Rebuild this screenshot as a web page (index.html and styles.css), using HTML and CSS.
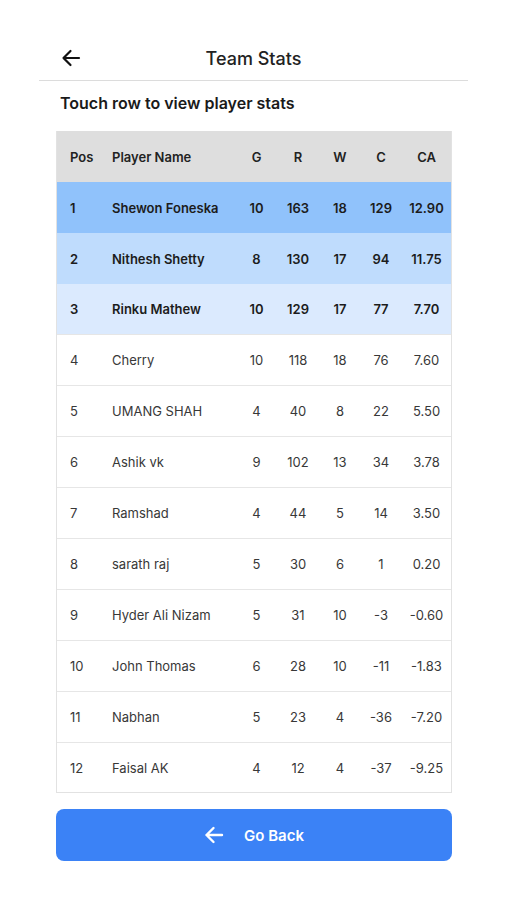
FILE: index.html
```html
<!DOCTYPE html>
<html lang="en">
<head>
    <meta charset="UTF-8">
    <meta name="viewport" content="width=device-width, initial-scale=1.0">
    <title>Team Stats</title>
    <link rel="stylesheet" href="styles.css">
</head>
<body>

<div class="screen">
    <!-- Barra superior -->
    <div class="topbar">
        <button class="back-icon" aria-label="Back">
            <svg width="20" height="18" viewBox="0 0 20 18" fill="none" stroke="#111" stroke-width="2.2" stroke-linecap="round" stroke-linejoin="round">
                <path d="M18 9H2.5M9.5 2L2.5 9l7 7"/>
            </svg>
        </button>
        <h1>Team Stats</h1>
    </div>

    <h2 class="hint">Touch row to view player stats</h2>

    <div class="table">
        <div class="row head">
            <span>Pos</span><span>Player Name</span><span class="num">G</span><span class="num">R</span><span class="num">W</span><span class="num">C</span><span class="num">CA</span>
        </div>
        <div class="row top top1">
            <span>1</span><span>Shewon Foneska</span><span class="num">10</span><span class="num">163</span><span class="num">18</span><span class="num">129</span><span class="num">12.90</span>
        </div>
        <div class="row top top2">
            <span>2</span><span>Nithesh Shetty</span><span class="num">8</span><span class="num">130</span><span class="num">17</span><span class="num">94</span><span class="num">11.75</span>
        </div>
        <div class="row top top3">
            <span>3</span><span>Rinku Mathew</span><span class="num">10</span><span class="num">129</span><span class="num">17</span><span class="num">77</span><span class="num">7.70</span>
        </div>
        <div class="row">
            <span>4</span><span>Cherry</span><span class="num">10</span><span class="num">118</span><span class="num">18</span><span class="num">76</span><span class="num">7.60</span>
        </div>
        <div class="row">
            <span>5</span><span>UMANG SHAH</span><span class="num">4</span><span class="num">40</span><span class="num">8</span><span class="num">22</span><span class="num">5.50</span>
        </div>
        <div class="row">
            <span>6</span><span>Ashik vk</span><span class="num">9</span><span class="num">102</span><span class="num">13</span><span class="num">34</span><span class="num">3.78</span>
        </div>
        <div class="row">
            <span>7</span><span>Ramshad</span><span class="num">4</span><span class="num">44</span><span class="num">5</span><span class="num">14</span><span class="num">3.50</span>
        </div>
        <div class="row">
            <span>8</span><span>sarath raj</span><span class="num">5</span><span class="num">30</span><span class="num">6</span><span class="num">1</span><span class="num">0.20</span>
        </div>
        <div class="row">
            <span>9</span><span>Hyder Ali Nizam</span><span class="num">5</span><span class="num">31</span><span class="num">10</span><span class="num">-3</span><span class="num">-0.60</span>
        </div>
        <div class="row">
            <span>10</span><span>John Thomas</span><span class="num">6</span><span class="num">28</span><span class="num">10</span><span class="num">-11</span><span class="num">-1.83</span>
        </div>
        <div class="row">
            <span>11</span><span>Nabhan</span><span class="num">5</span><span class="num">23</span><span class="num">4</span><span class="num">-36</span><span class="num">-7.20</span>
        </div>
        <div class="row last">
            <span>12</span><span>Faisal AK</span><span class="num">4</span><span class="num">12</span><span class="num">4</span><span class="num">-37</span><span class="num">-9.25</span>
        </div>
    </div>

    <button class="go-back">
        <svg width="20" height="18" viewBox="0 0 20 18" fill="none" stroke="#fff" stroke-width="2.4" stroke-linecap="round" stroke-linejoin="round">
            <path d="M18 9H2.5M9.5 2L2.5 9l7 7"/>
        </svg>
        <span>Go Back</span>
    </button>
</div>

</body>
</html>
```

FILE: styles.css
```css
body {
    margin: 0;
    background: #fff;
    font-family: Inter, "Noto Sans", Arial, sans-serif;
    color: #1f1f1f;
}
.screen {
    width: 507px;
    padding-top: 38px;
}
.topbar {
    position: relative;
    margin: 0 39px;
    height: 42px;
    border-bottom: 1px solid #dcdcdc;
    display: flex;
    align-items: center;
    justify-content: center;
}
.topbar h1 {
    margin: 0;
    font-size: 18px;
    font-weight: 500;
    color: #222;
    padding-bottom: 2px;
}
.back-icon {
    position: absolute;
    left: 22px;
    top: 11px;
    padding: 0;
    border: none;
    background: none;
    display: flex;
}
.hint {
    margin: 12px 0 0 60px;
    font-size: 16px;
    font-weight: 600;
    color: #1a1a1a;
    height: 38px;
    line-height: 20px;
}
.table {
    margin: 0 55px 0 56px;
    border: 1px solid #e2e2e2;
    border-top: none;
}
.row {
    display: grid;
    grid-template-columns: 42px 137px 41px 42px 42px 40px 51px;
    height: 50px;
    align-items: center;
    border-bottom: 1px solid #e6e6e6;
    font-size: 13px;
    color: #383838;
}
.row span:first-child, .row span:nth-child(2) {
    padding-left: 13px;
}
.row .num {
    text-align: center;
}
.row.head {
    background: #dedede;
    font-weight: 600;
    color: #222;
    border-bottom: none;
    height: 51px;
}
.row.top {
    font-weight: 600;
    color: #1c1c1c;
    border-bottom: none;
    height: 51px;
}
.top1 {
    background: #90c2fb;
}
.top2 {
    background: #bfdcfd;
}
.top3 {
    background: #dbeafe;
    border-bottom: 1px solid #e6e6e6 !important;
    height: 50px !important;
}
.row.last {
    border-bottom: none;
    height: 49px;
}
.go-back {
    margin: 16px 0 0 56px;
    width: 396px;
    height: 52px;
    border: none;
    border-radius: 8px;
    background: #3b82f6;
    color: #fff;
    font-family: inherit;
    font-size: 15px;
    font-weight: 600;
    display: flex;
    align-items: center;
    justify-content: center;
    gap: 20px;
    padding-right: 6px;
    cursor: pointer;
}
```
